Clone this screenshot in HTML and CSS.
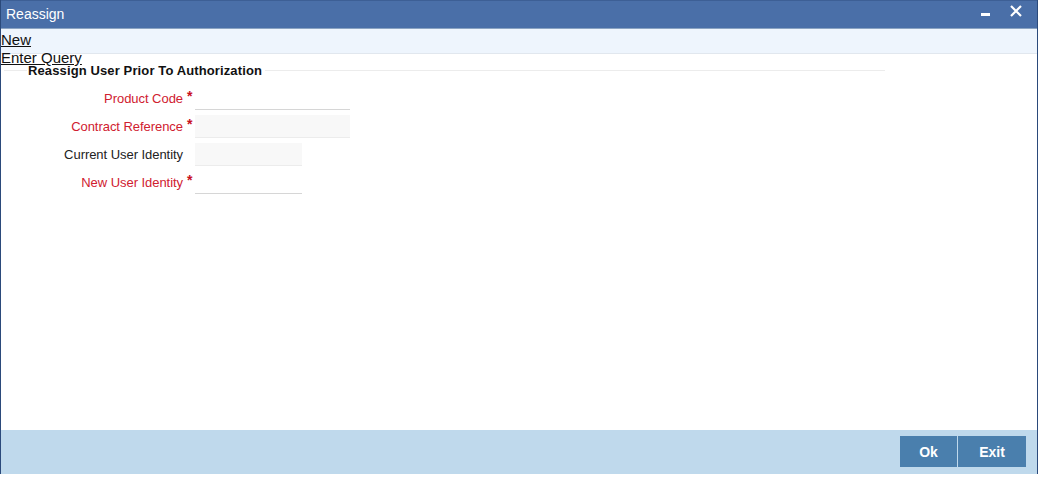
FILE: index.html
```html
<!DOCTYPE html>
<html>
<head>
<meta charset="utf-8">
<title>Reassign</title>
<link rel="stylesheet" href="styles.css">
</head>
<body>
<div class="window">
  <header class="titlebar">
    <span class="title">Reassign</span>
    <div class="controls">
      <svg class="ctl" width="12" height="12" viewBox="0 0 12 12"><rect x="2" y="8" width="9" height="3" fill="#fff"/></svg>
      <svg class="ctl" width="14" height="14" viewBox="0 0 14 14"><path d="M2 2 L12 12 M12 2 L2 12" stroke="#fff" stroke-width="2.2"/></svg>
    </div>
  </header>
  <nav class="toolbar">
    <a class="tlink" href="#">New</a>
    <a class="tlink" href="#">Enter Query</a>
  </nav>
  <main class="content">
    <div class="section-head">
      <span class="rule-short"></span>
      <span class="legend">Reassign User Prior To Authorization</span>
      <span class="rule-long"></span>
    </div>
    <div class="form">
      <label class="lbl req">Product Code</label><span class="star">*</span><span class="field wide plain"></span>
      <label class="lbl req">Contract Reference</label><span class="star">*</span><span class="field wide ro"></span>
      <label class="lbl">Current User Identity</label><span class="star"></span><span class="field narrow ro"></span>
      <label class="lbl req">New User Identity</label><span class="star">*</span><span class="field narrow plain"></span>
    </div>
  </main>
  <footer class="footer">
    <button class="btn ok">Ok</button>
    <button class="btn exit">Exit</button>
  </footer>
</div>
</body>
</html>
```

FILE: styles.css
```css
* { box-sizing: border-box; }
html, body { margin: 0; padding: 0; background: #fff; }
body { font-family: "Liberation Sans", Arial, sans-serif; }

.window {
  width: 1038px;
  height: 474px;
  display: flex;
  flex-direction: column;
  border-left: 1px solid #2b4a7b;
  border-right: 1px solid #2b4a7b;
  background: #fff;
}

.titlebar {
  height: 29px;
  flex: none;
  background: #4a6fa8;
  border-top: 1px solid #3d5f95;
  border-bottom: 1px solid #8aa3c2;
  display: flex;
  align-items: center;
  justify-content: space-between;
  padding: 0 14px 2px 5px;
}
.title { color: #fff; font-size: 14px; }
.controls { display: flex; align-items: center; gap: 18px; margin-top: -6px; }
.ctl { display: block; }

.toolbar {
  height: 25px;
  flex: none;
  background: #eef5fd;
  border-bottom: 1px solid #e1e7ee;
  padding: 2px 0 0 0;
  display: flex;
  flex-direction: column;
}
.tlink {
  color: #111;
  font-size: 15px;
  line-height: 18px;
  text-decoration: underline;
  align-self: flex-start;
  position: relative;
}

.content { flex: 1; padding: 9px 0 0 3px; }

.section-head {
  display: flex;
  align-items: center;
  width: 881px;
  height: 14px;
}
.rule-short { width: 23px; border-top: 1px solid #ececec; }
.rule-long { flex: 1; border-top: 1px solid #ececec; margin-left: 2px; }
.legend {
  font-size: 13px;
  font-weight: bold;
  color: #111;
  padding: 0 1px;
  letter-spacing: 0.12px;
}

.form {
  display: grid;
  grid-template-columns: 179px 12px auto;
  grid-auto-rows: 28px;
  margin-top: 7px;
  justify-items: start;
}
.lbl {
  justify-self: end;
  align-self: center;
  font-size: 13px;
  color: #222;
  margin-top: 0;
  letter-spacing: -0.05px;
}
.lbl.req { color: #d0202f; }
.star {
  color: #c8101e;
  font-size: 14px;
  font-weight: bold;
  padding-left: 4px;
  padding-top: 5px;
  line-height: 14px;
}
.field {
  margin-top: 3px;
  height: 23px;
}
.wide { width: 155px; }
.narrow { width: 107px; }
.plain { background: #fff; border-bottom: 1px solid #d6d6d6; }
.ro { background: #f8f8f8; border-bottom: 1px solid #ececec; }

.footer {
  height: 44px;
  flex: none;
  background: #bfd9ec;
  display: flex;
  justify-content: flex-end;
  align-items: flex-start;
  gap: 1px;
  padding: 6px 11px 0 0;
}
.btn {
  height: 31px;
  border: none;
  background: #4a7fad;
  color: #fff;
  font-family: "Liberation Sans", Arial, sans-serif;
  font-size: 14px;
  font-weight: bold;
  padding: 0;
}
.ok { width: 57px; }
.exit { width: 68px; }
```
